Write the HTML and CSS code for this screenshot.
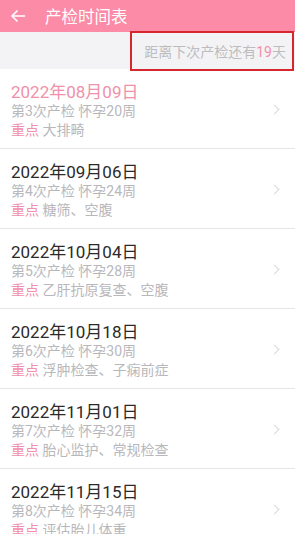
FILE: index.html
```html
<!DOCTYPE html>
<html lang="zh">
<head>
    <meta charset="UTF-8">
    <meta name="viewport" content="width=device-width, initial-scale=1.0">
    <title>产检时间表</title>
    <link rel="stylesheet" href="styles.css">
</head>
<body>
    <div class="app">
        <div class="header">
            <svg class="back" viewBox="0 0 16 14"><path d="M15 7H2M7.5 1.5L2 7l5.5 5.5" fill="none" stroke="#fff" stroke-width="1.6"/></svg>
            <span class="title">产检时间表</span>
        </div>
        <div class="countdown">
            <span>距离下次产检还有<em>19</em>天</span>
            <div class="mark"></div>
        </div>
        <div class="list">
            <div class="item">
                <div class="info">
                    <div class="date next">2022年08月09日</div>
                    <div class="sub">第3次产检 怀孕20周</div>
                    <div class="sub"><b>重点</b> 大排畸</div>
                </div>
                <span class="arrow"></span>
            </div>
            <div class="item">
                <div class="info">
                    <div class="date">2022年09月06日</div>
                    <div class="sub">第4次产检 怀孕24周</div>
                    <div class="sub"><b>重点</b> 糖筛、空腹</div>
                </div>
                <span class="arrow"></span>
            </div>
            <div class="item">
                <div class="info">
                    <div class="date">2022年10月04日</div>
                    <div class="sub">第5次产检 怀孕28周</div>
                    <div class="sub"><b>重点</b> 乙肝抗原复查、空腹</div>
                </div>
                <span class="arrow"></span>
            </div>
            <div class="item">
                <div class="info">
                    <div class="date">2022年10月18日</div>
                    <div class="sub">第6次产检 怀孕30周</div>
                    <div class="sub"><b>重点</b> 浮肿检查、子痫前症</div>
                </div>
                <span class="arrow"></span>
            </div>
            <div class="item">
                <div class="info">
                    <div class="date">2022年11月01日</div>
                    <div class="sub">第7次产检 怀孕32周</div>
                    <div class="sub"><b>重点</b> 胎心监护、常规检查</div>
                </div>
                <span class="arrow"></span>
            </div>
            <div class="item">
                <div class="info">
                    <div class="date">2022年11月15日</div>
                    <div class="sub">第8次产检 怀孕34周</div>
                    <div class="sub"><b>重点</b> 评估胎儿体重</div>
                </div>
                <span class="arrow"></span>
            </div>
        </div>
    </div>
</body>
</html>
```

FILE: styles.css
```css
body {
    margin: 0;
    padding: 0;
    background: #fff;
    font-family: Roboto, "Noto Sans CJK SC", sans-serif;
    overflow: hidden;
}

.app {
    width: 295px;
    height: 534px;
    overflow: hidden;
    background: #fff;
}

.header {
    height: 32px;
    background: #fb8ba6;
    display: flex;
    align-items: center;
    padding-left: 10px;
}

.back {
    width: 16px;
    height: 14px;
}

.title {
    margin-left: 19px;
    color: #fff;
    font-size: 16.5px;
}

.countdown {
    position: relative;
    height: 37px;
    background: #f3f3f5;
    display: flex;
    align-items: center;
    justify-content: flex-end;
    padding-right: 9px;
    font-size: 14px;
    color: #bcbcc0;
}

.countdown em {
    font-style: normal;
    color: #f090aa;
}

.mark {
    position: absolute;
    left: 130px;
    top: -1px;
    width: 160px;
    height: 36px;
    border: 2px solid #d7262e;
}

.item {
    display: flex;
    align-items: center;
    padding: 14px 17px 8px 11px;
    border-bottom: 1px solid #e6e6e8;
}

.info {
    flex: 1;
}

.date {
    font-size: 17px;
    line-height: 19px;
    color: #2a2a2a;
}

.date.next {
    color: #f090aa;
}

.sub {
    font-size: 14px;
    line-height: 19px;
    color: #b8b8bc;
}

.sub b {
    font-weight: normal;
    color: #f090aa;
}

.arrow {
    width: 6px;
    height: 6px;
    border-top: 1px solid #d8d8dc;
    border-right: 1px solid #d8d8dc;
    transform: rotate(45deg);
    margin-bottom: 4px;
}
```
